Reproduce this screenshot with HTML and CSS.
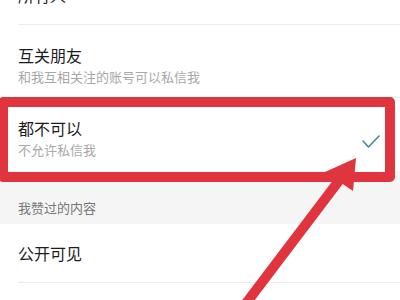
FILE: index.html
```html
<!DOCTYPE html>
<html lang="zh-CN">
<head>
  <meta charset="UTF-8">
  <meta name="viewport" content="width=device-width, initial-scale=1.0">
  <title>私信设置</title>
  <link rel="stylesheet" href="styles.css">
</head>
<body>
  <div class="page">
    <div class="list">
      <div class="item">
        <div class="text">
          <div class="title">所有人</div>
        </div>
      </div>
      <div class="item">
        <div class="text">
          <div class="title">互关朋友</div>
          <div class="desc">和我互相关注的账号可以私信我</div>
        </div>
      </div>
      <div class="item item-checked">
        <div class="text">
          <div class="title">都不可以</div>
          <div class="desc">不允许私信我</div>
        </div>
        <svg class="check" width="18" height="14" viewBox="0 0 18 14">
          <polyline points="1,6 6.5,12 17,1" fill="none" stroke="#3b8e98" stroke-width="1.6" stroke-linecap="round" stroke-linejoin="round"/>
        </svg>
        <div class="mark"></div>
      </div>
      <div class="section">我赞过的内容</div>
      <div class="item">
        <div class="text">
          <div class="title">公开可见</div>
        </div>
      </div>
    </div>

    <!-- 标注箭头 -->
    <svg class="arrow" width="400" height="300" viewBox="0 0 400 300">
      <line x1="244" y1="306" x2="341" y2="178" stroke="#e0353f" stroke-width="10"/>
      <polygon points="356,158 325,172 353,191" fill="#e0353f"/>
    </svg>
  </div>
</body>
</html>
```

FILE: styles.css
```css
* {
  margin: 0;
  padding: 0;
  box-sizing: border-box;
}
body {
  background: #fff;
  font-family: "Noto Sans CJK SC", "Noto Sans", sans-serif;
}
.page {
  position: relative;
  width: 400px;
  height: 300px;
  overflow: hidden;
}
.list {
  margin-top: -34px;
}
.item {
  display: flex;
  align-items: center;
  padding: 19px 20px 12px 18px;
  background: #fff;
  position: relative;
}
/* 分割线从文字左侧开始 */
.item::after {
  content: "";
  position: absolute;
  left: 18px;
  right: 0;
  bottom: 0;
  height: 1px;
  background: #ececec;
}
.item:first-child,
.section + .item {
  padding: 18px 20px 19px 18px;
}
.item-checked::after {
  display: none;
}
.text {
  flex: 1;
}
.title {
  font-size: 16px;
  line-height: 22px;
  color: #1c1c1c;
}
.desc {
  margin-top: 2px;
  font-size: 13px;
  line-height: 18px;
  color: #a8a8a8;
}
.check {
  margin-top: 8px;
}
.mark {
  position: absolute;
  top: -1px;
  bottom: -11px;
  left: -2px;
  right: 5px;
  border: 10px solid #e0353f;
  border-radius: 5px;
}
.section {
  padding: 28px 18px 7px;
  font-size: 13px;
  line-height: 18px;
  color: #777;
  background: #f5f5f5;
}
.arrow {
  position: absolute;
  top: 0;
  left: 0;
  pointer-events: none;
}
```
